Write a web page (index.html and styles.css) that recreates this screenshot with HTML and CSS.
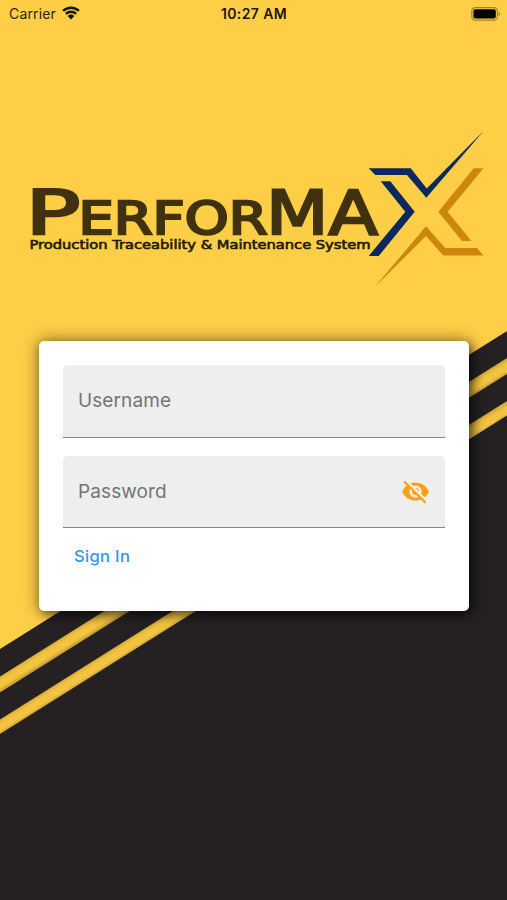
FILE: index.html
```html
<!DOCTYPE html>
<html lang="en">
<head>
    <meta charset="UTF-8">
    <meta name="viewport" content="width=device-width, initial-scale=1.0">
    <title>PerforMAX - Sign In</title>
    <link rel="stylesheet" href="styles.css">
</head>
<body>
    <div class="screen">
        <!-- Diagonal stripes -->
        <svg class="background" viewBox="0 0 507 900" aria-hidden="true">
            <defs>
                <linearGradient id="stripe" gradientUnits="userSpaceOnUse" x1="0" y1="676" x2="7.2" y2="687.5">
                    <stop offset="0" stop-color="#d5a935"/>
                    <stop offset="0.3" stop-color="#f2c341"/>
                    <stop offset="0.7" stop-color="#f4c542"/>
                    <stop offset="1" stop-color="#c49c33"/>
                </linearGradient>
                <linearGradient id="stripe2" href="#stripe" gradientTransform="translate(0 43)"/>
            </defs>
            <path fill="#252122" d="M0 649 507 331V900H0z"/>
            <path fill="url(#stripe)" d="M0 676.5 507 358V374L0 692.5z"/>
            <path fill="url(#stripe2)" d="M0 719.5 507 401V415.5L0 734z"/>
        </svg>

        <header class="status-bar">
            <div class="carrier">
                <span>Carrier</span>
                <svg class="wifi" width="18" height="14" viewBox="0 0 18 14">
                    <path d="M1.1 4.9a11.4 11.4 0 0 1 15.8 0M3.9 7.8a7.4 7.4 0 0 1 10.2 0" fill="none" stroke="#17130a" stroke-width="2.4"/>
                    <path d="M5.7 9.9a4.8 4.8 0 0 1 6.6 0L9 13.4z" fill="#17130a"/>
                </svg>
            </div>
            <time class="clock">10:27 AM</time>
            <div class="power">
                <svg width="30" height="14" viewBox="0 0 30 14">
                    <rect x="0.8" y="0.6" width="25.6" height="12.6" rx="3.6" fill="none" stroke="#a4822b" stroke-width="1.2"/>
                    <rect x="2.4" y="2.3" width="22.4" height="9.2" rx="1.8" fill="#000"/>
                    <path d="M27.6 4.8q1.6.7 1.6 2.1t-1.6 2.1z" fill="#a4822b"/>
                </svg>
            </div>
        </header>

        <svg class="logo" viewBox="0 0 507 180" role="img" aria-label="PerforMAX">
            <g class="logo-name">
                <text class="cap" x="25.5" y="113" textLength="55" lengthAdjust="spacingAndGlyphs">P</text>
                <text class="small-cap" x="78.5" y="113" textLength="189" lengthAdjust="spacingAndGlyphs">ERFOR</text>
                <text class="cap" x="266" y="113" textLength="112" lengthAdjust="spacingAndGlyphs">MA</text>
            </g>
            <text class="tagline" x="29.5" y="128" textLength="341" lengthAdjust="spacingAndGlyphs">Production Traceability &amp; Maintenance System</text>
            <g transform="translate(0 -120)">
                <path fill="#0b285f" d="M368.7 167.3H410.7L426.7 187.5 484 129.5 426.3 196.7 407 174H375.3z"/>
                <path fill="#0b285f" d="M380.7 180.3H390.3L414.7 210.7 378.7 255H368.7L405.3 210.7z"/>
                <path fill="#cd870e" d="M473.7 167.3H483.5L447.7 210.7 471.3 240H462L438.3 210.7z"/>
                <path fill="#cd870e" d="M426 225.3 445.3 247H477L483.5 254.4H443.3L426 235 374.5 286.2z"/>
            </g>
        </svg>

        <form class="login-card">
            <label class="field">
                <input type="text" placeholder="Username">
            </label>
            <label class="field">
                <input type="password" placeholder="Password">
                <svg class="eye" viewBox="0 0 24 24">
                    <path d="M12 7c2.76 0 5 2.24 5 5 0 .65-.13 1.26-.36 1.83l2.92 2.92c1.51-1.26 2.7-2.89 3.43-4.75-1.73-4.39-6-7.5-11-7.5-1.4 0-2.74.25-3.98.7l2.16 2.16C10.74 7.13 11.35 7 12 7zM2 4.27l2.28 2.28.46.46C3.08 8.3 1.78 10.02 1 12c1.73 4.39 6 7.5 11 7.5 1.55 0 3.03-.3 4.38-.84l.42.42L19.73 22 21 20.73 3.27 3 2 4.27zM7.53 9.8l1.55 1.55c-.05.21-.08.43-.08.65 0 1.66 1.34 3 3 3 .22 0 .44-.03.65-.08l1.55 1.55c-.67.33-1.41.53-2.2.53-2.76 0-5-2.24-5-5 0-.79.2-1.53.53-2.2zm4.31-.78l3.15 3.15.02-.16c0-1.66-1.34-3-3-3l-.17.01z"/>
                </svg>
            </label>
            <button class="sign-in" type="button">Sign In</button>
        </form>
    </div>
</body>
</html>
```
FILE: styles.css
```css
* {
    box-sizing: border-box;
}
body {
    margin: 0;
    font-family: Inter, "Liberation Sans", sans-serif;
}
.screen {
    position: relative;
    width: 507px;
    height: 900px;
    overflow: hidden;
    background: #ffce47;
    display: flex;
    flex-direction: column;
    isolation: isolate;
}
.background {
    position: absolute;
    inset: 0;
    width: 100%;
    height: 100%;
    z-index: -1;
}
.status-bar {
    display: grid;
    grid-template-columns: 1fr auto 1fr;
    align-items: center;
    height: 27px;
    padding: 0 6px 0 9px;
    color: #2b240f;
    font-size: 14px;
}
.carrier {
    display: flex;
    align-items: center;
    gap: 6px;
    letter-spacing: 0.15px;
}
.wifi {
    margin-top: -1px;
}
.clock {
    margin-right: 2px;
    font-size: 14px;
    font-weight: 600;
    letter-spacing: 0.4px;
    color: #1b160a;
}
.power {
    display: flex;
    justify-content: flex-end;
}
.logo {
    width: 507px;
    height: 180px;
    margin-top: 94px;
    font-family: "DejaVu Sans", sans-serif;
}
.logo-name {
    fill: #40320f;
    stroke: #40320f;
    stroke-width: 2.4;
}
.cap {
    font-size: 61px;
}
.small-cap {
    font-size: 44.5px;
}
.tagline {
    font-size: 12px;
    fill: #211a09;
    stroke: #211a09;
    stroke-width: 0.6;
}
.login-card {
    width: 430px;
    height: 270px;
    margin: 39.5px 0 0 39px;
    padding: 24.5px 24.5px 0 24px;
    background: #fff;
    border-radius: 5px;
    box-shadow: 0 0 16px 1px rgba(0, 0, 0, 0.45), 4px 4px 10px rgba(0, 0, 0, 0.45);
}
.field {
    display: flex;
    align-items: center;
    height: 72.5px;
    margin-bottom: 18px;
    padding: 0 15px;
    background: #eee;
    border-bottom: 1.5px solid #858585;
    border-radius: 5px 5px 0 0;
}
.field input {
    flex: 1;
    min-width: 0;
    padding: 0;
    border: 0;
    outline: 0;
    background: none;
    font: 400 19px Inter, "Liberation Sans", sans-serif;
    letter-spacing: 0.1px;
}
.field input::placeholder {
    color: #757575;
    opacity: 1;
}
.eye {
    width: 29px;
    height: 29px;
    fill: #fb9f15;
}
.sign-in {
    display: block;
    margin: 0 0 0 11px;
    padding: 0;
    border: 0;
    background: none;
    color: #3297ec;
    font: 500 16.5px/20px Inter, "Liberation Sans", sans-serif;
    letter-spacing: 0.35px;
}
```
